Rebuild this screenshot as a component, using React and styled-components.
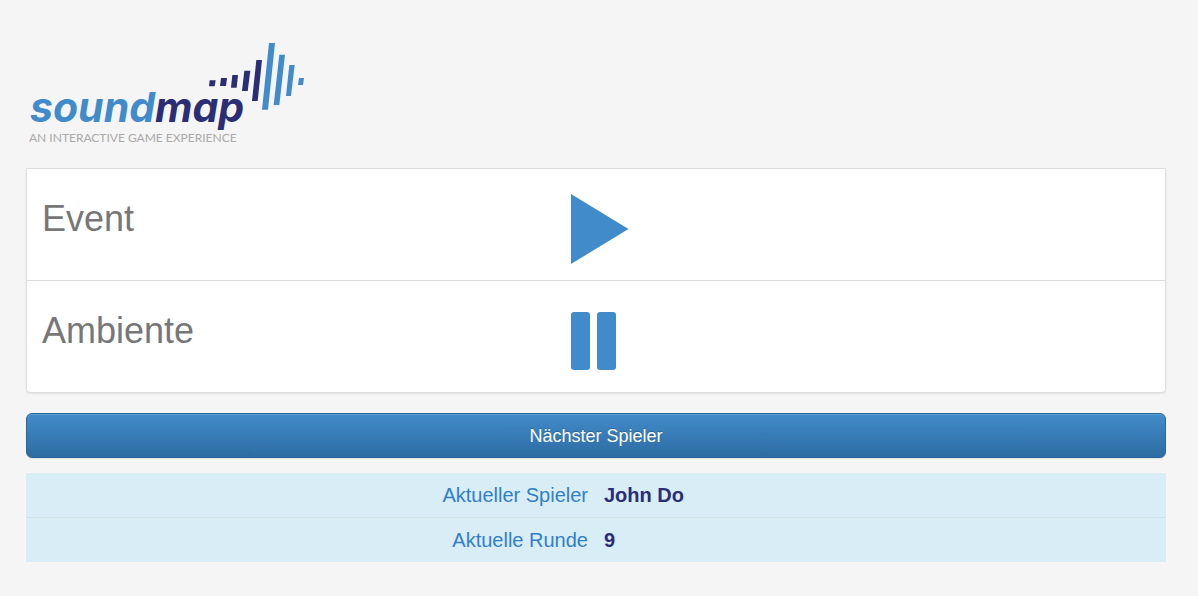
import React, { useState } from "react";
import styled, { createGlobalStyle } from "styled-components";

const GlobalStyle = createGlobalStyle`
  *, *::before, *::after { box-sizing: border-box; }
  body {
    margin: 0;
    background: #f5f5f5;
    color: #333;
    font-family: "Liberation Sans", Arial, Helvetica, sans-serif;
    font-size: 14px;
    line-height: 20px;
  }
`;

const Page = styled.main`
  padding: 36px 32px 32px 26px;
`;

const LogoLink = styled.a`
  display: block;
  width: 288px;
  margin-bottom: 20px;
`;

const LogoSvg = styled.svg`
  display: block;
  width: 288px;
  height: 112px;
`;

const LogoName = styled.text`
  font: italic 700 41px Inter, "Open Sans", sans-serif;
  font-feature-settings: "cv11" 1;
`;

const LogoTagline = styled.text`
  font: 400 12px Lato, "Open Sans", sans-serif;
  fill: #aaa;
`;

const TrackPanel = styled.section`
  background: #fff;
  border: 1px solid #ddd;
  border-radius: 0 0 4px 4px;
  box-shadow: 0 1px 2px rgba(0, 0, 0, 0.075);
  margin-bottom: 20px;
`;

const TrackRow = styled.div`
  display: grid;
  grid-template-columns: 1fr auto 1fr;
  align-items: start;
  padding: 25px 15px 16px;

  & + & {
    border-top: 1px solid #ddd;
  }
`;

const TrackTitle = styled.h1`
  margin: 0;
  color: #777;
  font-size: 36px;
  font-weight: 400;
  line-height: 50px;
`;

const IconButton = styled.button`
  display: block;
  padding: 0;
  border: 0;
  background: none;
  color: #428bca;
  cursor: pointer;

  svg {
    display: block;
    width: 70px;
    height: 70px;
    fill: currentColor;
  }
`;

const PrimaryButton = styled.button`
  display: block;
  width: 100%;
  height: 45px;
  margin-bottom: 15px;
  padding: 0 16px;
  border: 1px solid #2b669a;
  border-radius: 6px;
  background: linear-gradient(to bottom, #428bca 0%, #2d6ca2 100%);
  box-shadow: inset 0 1px 0 rgba(255, 255, 255, 0.15), 0 1px 1px rgba(0, 0, 0, 0.075);
  color: #fff;
  font-family: inherit;
  font-size: 18px;
  line-height: 24px;
  text-shadow: 0 -1px 0 rgba(0, 0, 0, 0.2);
  cursor: pointer;
`;

const StatusTable = styled.table`
  width: 100%;
  table-layout: fixed;
  border-spacing: 0;
  background: #d9edf7;
  font-size: 20px;
  line-height: 28px;

  th, td {
    padding: 8px;
  }

  tr + tr > * {
    border-top: 1px solid #d0e1e7;
  }
`;

const StatusLabel = styled.th`
  color: #3080c8;
  font-weight: 400;
  text-align: right;
`;

const StatusValue = styled.td`
  color: #2b2e74;
  font-weight: 700;
`;

const darkBars = [
  "29,133 47,133 44,151 27,151",
  "63,126 81,126 78,150 60,150",
  "97,117 114,117 110,155 93,155",
  "133,104 151,104 143,165 126,165",
  "169,72 186,72 173,195 156,195",
];

const lightBars = [
  "207,21 225,21 204,221 186,221",
  "238,56 255,56 238,207 221,207",
  "268,87 284,87 273,180 258,180",
  "297,126 312,126 309,147 294,147",
];

function Logo() {
  return (
    <LogoSvg viewBox="0 0 288 112" role="img" aria-label="soundmap – an interactive game experience">
      <LogoName x="4" y="86">
        <tspan fill="#428bca">sound</tspan>
        <tspan fill="#2b2e74">map</tspan>
      </LogoName>
      <LogoTagline x="3" y="106">AN INTERACTIVE GAME EXPERIENCE</LogoTagline>
      <g transform="translate(174 0) scale(0.3333)">
        <g fill="#2b2e74">
          {darkBars.map((points) => <polygon key={points} points={points} />)}
        </g>
        <g fill="#428bca">
          {lightBars.map((points) => <polygon key={points} points={points} />)}
        </g>
      </g>
    </LogoSvg>
  );
}

function Track({ title, initiallyPlaying }) {
  const [playing, setPlaying] = useState(initiallyPlaying);
  return (
    <TrackRow>
      <TrackTitle>{title}</TrackTitle>
      <IconButton
        type="button"
        aria-label={`${title} ${playing ? "anhalten" : "abspielen"}`}
        onClick={() => setPlaying(!playing)}
      >
        <svg viewBox="0 0 70 70" aria-hidden="true">
          {playing ? (
            <>
              <rect x="10" y="6" width="19" height="58" rx="3" />
              <rect x="36" y="6" width="19" height="58" rx="3" />
            </>
          ) : (
            <path d="M10 0 L67.5 35 L10 70 Z" />
          )}
        </svg>
      </IconButton>
    </TrackRow>
  );
}

export default function App() {
  return (
    <>
      <GlobalStyle />
      <Page>
        <LogoLink href="#"><Logo /></LogoLink>
        <TrackPanel>
          <Track title="Event" initiallyPlaying={false} />
          <Track title="Ambiente" initiallyPlaying />
        </TrackPanel>
        <PrimaryButton type="button">Nächster Spieler</PrimaryButton>
        <StatusTable>
          <tbody>
            <tr>
              <StatusLabel scope="row">Aktueller Spieler</StatusLabel>
              <StatusValue>John Do</StatusValue>
            </tr>
            <tr>
              <StatusLabel scope="row">Aktuelle Runde</StatusLabel>
              <StatusValue>9</StatusValue>
            </tr>
          </tbody>
        </StatusTable>
      </Page>
    </>
  );
}
